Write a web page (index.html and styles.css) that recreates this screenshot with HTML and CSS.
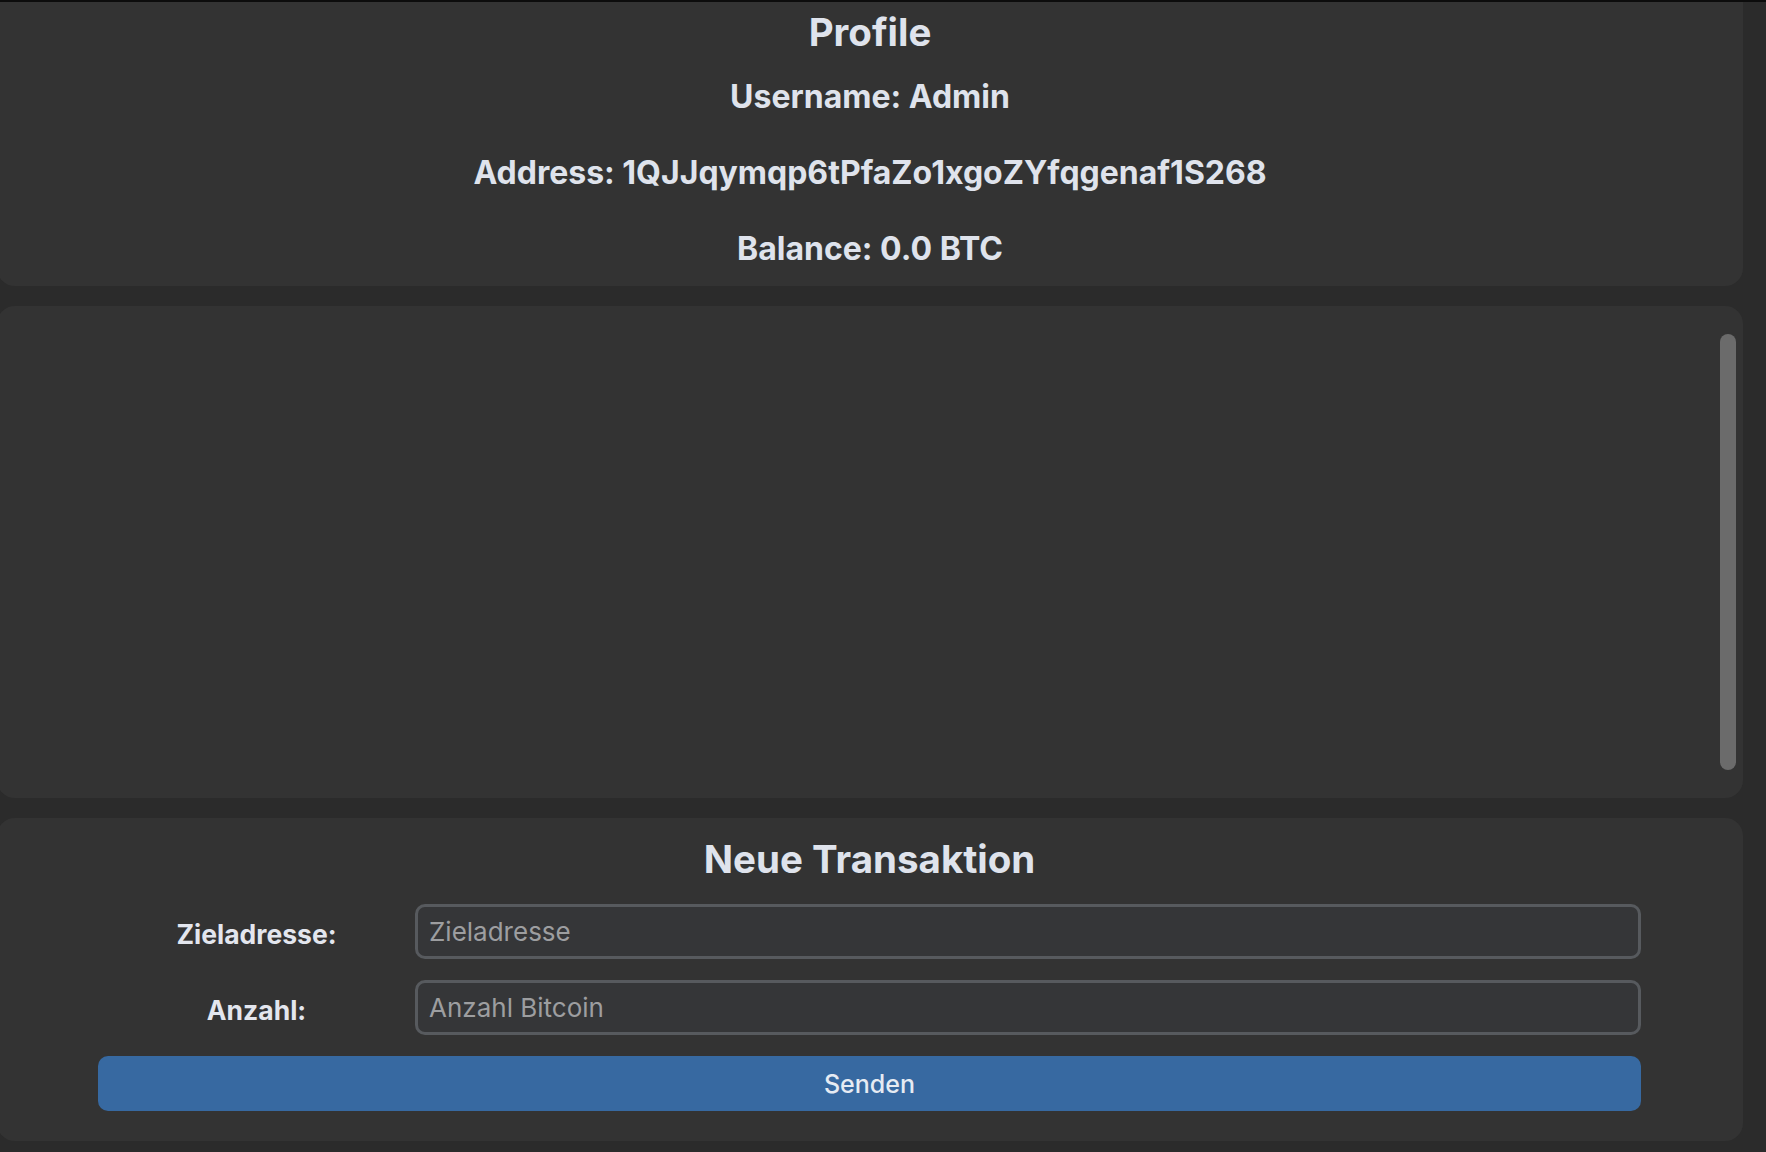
FILE: index.html
```html
<!DOCTYPE html>
<html lang="de">
<head>
<meta charset="utf-8">
<title>Wallet</title>
<link rel="stylesheet" href="styles.css">
</head>
<body>
<div class="topline"></div>
<main class="page">
  <section class="card profile">
    <h1 class="title">Profile</h1>
    <p class="info">Username: Admin</p>
    <p class="info">Address: 1QJJqymqp6tPfaZo1xgoZYfqgenaf1S268</p>
    <p class="info">Balance: 0.0 BTC</p>
  </section>
  <section class="card history">
    <div class="thumb"></div>
  </section>
  <section class="card tx">
    <h2 class="title tx-title">Neue Transaktion</h2>
    <form class="tx-form">
      <label class="tx-label" for="ziel">Zieladresse:</label>
      <input class="tx-input" id="ziel" type="text" placeholder="Zieladresse">
      <label class="tx-label" for="anzahl">Anzahl:</label>
      <input class="tx-input" id="anzahl" type="text" placeholder="Anzahl Bitcoin">
      <button class="tx-button" type="button">Senden</button>
    </form>
  </section>
</main>
</body>
</html>
```

FILE: styles.css
```css
* { box-sizing: border-box; }

html, body {
  margin: 0;
  padding: 0;
  background: #2b2b2b;
  font-family: "Inter", "Noto Sans", "Liberation Sans", sans-serif;
  color: #dfe3ec;
  overflow: hidden;
  height: 1152px;
}

.topline {
  height: 2px;
  background: #0c0c0c;
}

.page {
  margin: 0 23px 0 -3px;
  display: flex;
  flex-direction: column;
  gap: 20px;
}

.card {
  background: #333333;
  border-radius: 18px;
}

.profile {
  border-radius: 0 0 18px 18px;
  height: 284px;
  padding: 6px 0 0;
  text-align: center;
}

.title {
  margin: 0;
  font-size: 38.5px;
  line-height: 48px;
  font-weight: 700;
  text-align: center;
}

.info {
  margin: 42px 0 0;
  font-size: 32px;
  line-height: 34px;
  font-weight: 700;
}

.profile .title + .info {
  margin-top: 24px;
}

.history {
  height: 492px;
  display: flex;
  justify-content: flex-end;
  padding: 28px 7px 28px 0;
}

.thumb {
  width: 16px;
  height: 100%;
  background: #6b6b6b;
  border-radius: 8px;
}

.tx {
  height: 323px;
  padding: 17px 102px 0 101px;
}

.tx-title {
  margin-bottom: 21px;
}

.tx-form {
  display: grid;
  grid-template-columns: 317px 1fr;
  row-gap: 21px;
  align-items: center;
}

.tx-label {
  text-align: center;
  font-size: 26.5px;
  font-weight: 700;
  color: #e3e6ee;
  padding-top: 4px;
}

.tx-input {
  height: 55px;
  border: 3px solid #575a5e;
  border-radius: 10px;
  background: #353638;
  color: #dfe3ec;
  font-family: inherit;
  font-size: 26px;
  padding: 0 11px;
  outline: none;
}

.tx-input::placeholder {
  color: #9d9ea0;
}

.tx-button {
  grid-column: 1 / -1;
  height: 55px;
  border: none;
  border-radius: 10px;
  background: #3769a1;
  color: #e6ebf3;
  font-family: inherit;
  font-size: 25px;
  font-weight: 500;
}
```
